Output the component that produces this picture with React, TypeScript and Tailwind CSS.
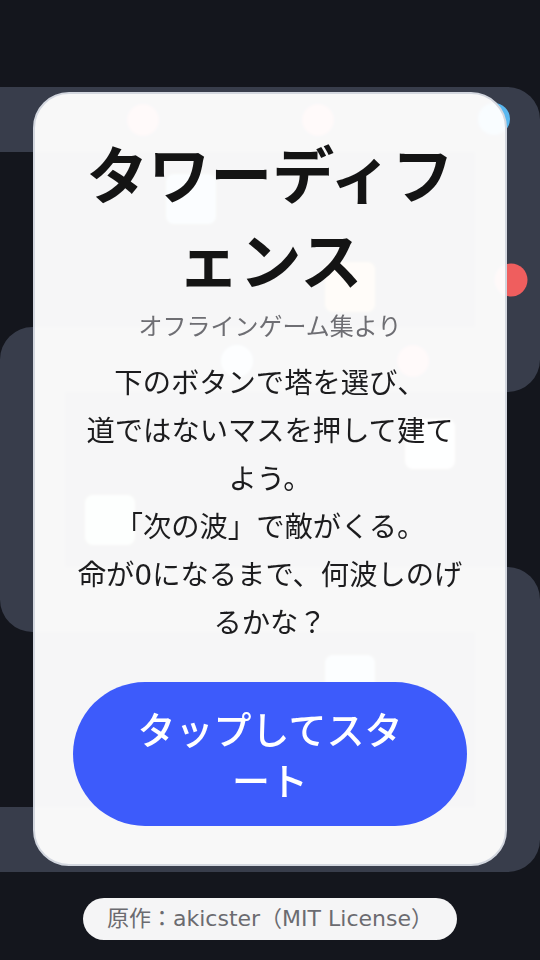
import React from "react";

function Board() {
  return (
    <svg
      className="absolute inset-0"
      width="540"
      height="960"
      viewBox="0 0 540 960"
      aria-hidden="true"
    >
      <polyline
        points="-60,119.5 507.5,119.5 507.5,359.5 32.5,359.5 32.5,599.5 507.5,599.5 507.5,839.5 -60,839.5"
        fill="none"
        stroke="#383d4b"
        strokeWidth="65"
        strokeLinejoin="round"
      />
      {/* towers */}
      <rect x="166" y="174" width="50" height="50" rx="8" fill="#8fc9f3" />
      <rect x="325" y="262" width="50" height="50" rx="8" fill="#f2b25a" />
      <rect x="405" y="419" width="50" height="50" rx="8" fill="#e6e9ef" />
      <rect x="85" y="495" width="50" height="50" rx="8" fill="#c9f0dc" />
      <rect x="325" y="655" width="50" height="50" rx="8" fill="#a9d3f5" />
      {/* enemies */}
      <circle cx="143" cy="120" r="16" fill="#ef6a6a" />
      <circle cx="318" cy="120" r="16" fill="#ef6a6a" />
      <circle cx="494" cy="119" r="16" fill="#5ab8ef" />
      <circle cx="511" cy="280" r="16.5" fill="#ef5e5e" />
      <circle cx="237" cy="361" r="16" fill="#bfe6f5" />
      <circle cx="413" cy="361" r="16" fill="#ef6a6a" />
    </svg>
  );
}

export default function App() {
  return (
    <div className="relative h-[960px] w-[540px] overflow-hidden bg-[#14161d] font-['DejaVu_Sans','Noto_Sans_CJK_JP',sans-serif]">
      <Board />
      <div className="relative flex flex-col items-center">
        <div className="mt-[92px] flex w-[474px] flex-col items-center rounded-[36px] border-2 border-[#d3d7df] bg-white/[0.965] px-[38px] pb-[38px] pt-[41px] text-center backdrop-blur-[1px]">
          <h1 className="text-[62px] font-bold leading-[86px] text-[#141414]">
            タワーディフェンス
          </h1>
          <p className="mt-1 text-[24px] leading-8 text-[#6e6e73]">
            オフラインゲーム集より
          </p>
          <p className="mt-[17px] w-full px-[2px] text-[28.3px] leading-[48px] text-[#1c1c1e]">
            下のボタンで塔を選び、
            <br />
            道ではないマスを押して建てよう。
            <br />
            「次の波」で敵がくる。
            <br />
            命が0になるまで、何波しのげるかな？
          </p>
          <button className="mt-[34px] h-[144px] w-full rounded-full bg-[#3d5bfb] px-12 pb-[18px] pt-6 text-[38px] font-medium leading-[51px] text-white">
            タップしてスタート
          </button>
        </div>
        <div className="mt-8 whitespace-nowrap rounded-full bg-[#f5f5f6] px-6 py-2 text-[22px] leading-[26px] text-[#6b6b70]">
          原作：akicster（MIT License）
        </div>
      </div>
    </div>
  );
}
